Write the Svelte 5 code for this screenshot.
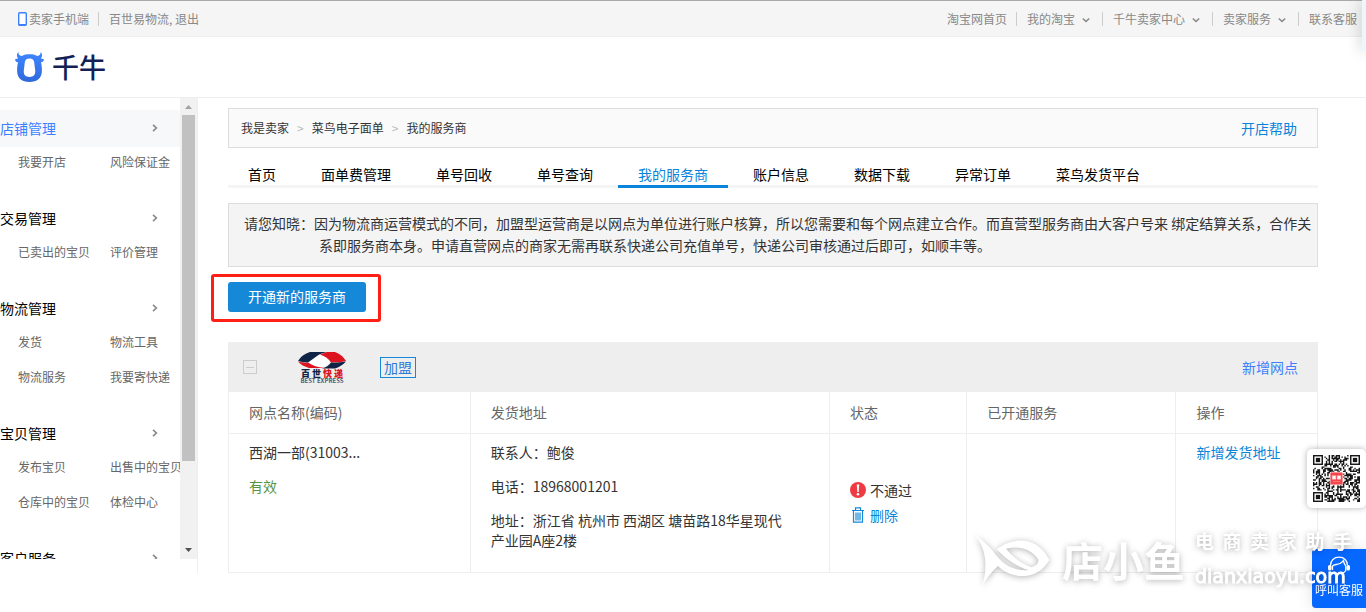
<script lang="ts">
	type MenuGroup = {
		title: string;
		items: string[];
		active?: boolean;
	};

	const topLinks = [
		{ label: '淘宝网首页', menu: false },
		{ label: '我的淘宝', menu: true },
		{ label: '千牛卖家中心', menu: true },
		{ label: '卖家服务', menu: true },
		{ label: '联系客服', menu: false }
	];

	const groups: MenuGroup[] = [
		{ title: '店铺管理', items: ['我要开店', '风险保证金'], active: true },
		{ title: '交易管理', items: ['已卖出的宝贝', '评价管理'] },
		{ title: '物流管理', items: ['发货', '物流工具', '物流服务', '我要寄快递'] },
		{ title: '宝贝管理', items: ['发布宝贝', '出售中的宝贝', '仓库中的宝贝', '体检中心'] },
		{ title: '客户服务', items: [] }
	];

	const tabs = [
		'首页',
		'面单费管理',
		'单号回收',
		'单号查询',
		'我的服务商',
		'账户信息',
		'数据下载',
		'异常订单',
		'菜鸟发货平台'
	];

	const slogan = [...'电商卖家助手'];

	let activeTab = $state('我的服务商');
	let expanded = $state(true);

	const QR_SIZE = 33;

	function inFinder(x: number, y: number) {
		const far = QR_SIZE - 8;
		return (x < 8 && y < 8) || (x >= far && y < 8) || (x < 8 && y >= far);
	}

	function buildQr() {
		let seed = 20231;
		let d = '';
		for (let y = 0; y < QR_SIZE; y++) {
			for (let x = 0; x < QR_SIZE; x++) {
				seed = (seed * 1103515245 + 12345) % 2147483648;
				if (!inFinder(x, y) && seed / 2147483648 > 0.48) d += `M${x} ${y}h1v1h-1z`;
			}
		}
		return d;
	}

	const qrPath = buildQr();
	const finders = [
		[0, 0],
		[QR_SIZE - 7, 0],
		[0, QR_SIZE - 7]
	];
</script>

<div class="topbar">
	<div class="top-left">
		<a href="#mobile" class="mobile">
			<svg width="9" height="14" viewBox="0 0 9 14" aria-hidden="true">
				<rect x="0.7" y="0.7" width="7.6" height="12.6" rx="1" fill="#fff" stroke="#3d7fff" stroke-width="1.4" />
				<path d="M1 12.8h7" stroke="#3d7fff" stroke-width="1.6" />
			</svg>
			卖家手机端
		</a>
		<span class="account"><a href="#account">百世易物流</a>, <a href="#logout">退出</a></span>
	</div>
	<nav class="top-right">
		{#each topLinks as link (link.label)}
			<a href="#top">
				{link.label}
				{#if link.menu}
					<svg class="caret" width="10" height="8" viewBox="0 0 10 8" aria-hidden="true">
						<path d="M1.8 2.5L5 5.5L8.2 2.5" fill="none" stroke="#888" stroke-width="1.6" />
					</svg>
				{/if}
			</a>
		{/each}
	</nav>
</div>

<header class="brand">
	<svg width="30" height="32" viewBox="0 0 30 32" aria-hidden="true">
		<defs>
			<linearGradient id="ox" x1="0" y1="0" x2="0" y2="1">
				<stop offset="0" stop-color="#3f86ff" />
				<stop offset="1" stop-color="#2f69dc" />
			</linearGradient>
		</defs>
		<path
			fill="url(#ox)"
			fill-rule="evenodd"
			d="M3.4 1C3.2 3.2 4.4 4.6 6.6 5C9 3.6 11.6 3.2 14.5 3.2S20 3.6 22.4 5C24.6 4.6 25.8 3.2 25.6 1C27.6 2.8 27.5 5.4 26 7.4L29 8.2C28.8 10.2 27.8 11.2 26 11.3C26.6 14 27 17 26.9 20C26.8 27.4 22 31 14.5 31S2.2 27.4 2.1 20C2 17 2.4 14 3 11.3C1.2 11.2 0.2 10.2 0 8.2L3 7.4C1.5 5.4 1.4 2.8 3.4 1ZM14.5 7.5C11.4 7.5 10.2 8.8 9.8 11.4L8.8 19.6C8.4 24.2 10.6 26 14.5 26S20.6 24.2 20.2 19.6L19.2 11.4C18.8 8.8 17.6 7.5 14.5 7.5Z"
		/>
	</svg>
	<span>千牛</span>
</header>

<div class="layout">
	<aside>
		<div class="side-scroll">
			<nav class="menu">
				{#each groups as group (group.title)}
					<section class:active={group.active}>
						<h2>
							<a href="#group">{group.title}</a>
							<svg width="8" height="10" viewBox="0 0 8 10" aria-hidden="true">
								<path d="M2 1.8L5.4 5L2 8.2" fill="none" stroke="#888" stroke-width="1.6" />
							</svg>
						</h2>
						<ul>
							{#each group.items as item (item)}
								<li><a href="#item">{item}</a></li>
							{/each}
						</ul>
					</section>
				{/each}
			</nav>
			<div class="scrollbar" aria-hidden="true">
				<svg width="17" height="17" viewBox="0 0 17 17"><path d="M5 11L8.5 7L12 11z" fill="#a3a3a3" /></svg>
				<div class="track"><div class="thumb"></div></div>
				<svg width="17" height="17" viewBox="0 0 17 17"><path d="M5 6L8.5 10L12 6z" fill="#505050" /></svg>
			</div>
		</div>
	</aside>

	<main>
		<div class="crumbs">
			<ol>
				<li><a href="#seller">我是卖家</a></li>
				<li><a href="#waybill">菜鸟电子面单</a></li>
				<li>我的服务商</li>
			</ol>
			<a href="#help" class="help">开店帮助</a>
		</div>

		<div class="tabs" role="tablist">
			{#each tabs as tab (tab)}
				<button
					type="button"
					role="tab"
					class:current={tab === activeTab}
					aria-selected={tab === activeTab}
					onclick={() => (activeTab = tab)}
				>
					{tab}
				</button>
			{/each}
		</div>

		<div class="notice">
			<p>
				请您知晓：因为物流商运营模式的不同，加盟型运营商是以网点为单位进行账户核算，所以您需要和每个网点建立合作。而直营型服务商由大客户号来 绑定结算关系，合作关系即服务商本身。申请直营网点的商家无需再联系快递公司充值单号，快递公司审核通过后即可，如顺丰等。
			</p>
		</div>

		<div class="open-new">
			<button type="button">开通新的服务商</button>
		</div>

		<div class="provider">
			<button
				type="button"
				class="toggle"
				aria-label="折叠"
				aria-expanded={expanded}
				onclick={() => (expanded = !expanded)}
			></button>
			<svg class="express" width="74" height="34" viewBox="0 0 74 34" role="img" aria-label="百世快递">
				<path d="M22 12L33 4.500Q36 4 38 5L46 12L38 17.500Q35 19 32 17.500Z" fill="#fff" />
				<path d="M13 11Q17 4.500 25 2H44C38 2.500 35 4 32 6L23 12.500Q18 12.500 13 11Z" fill="#0f2347" />
				<path d="M42 2H50Q57 4.500 61 11Q53 13 46 12.500C44 9 40 6 35 4.500Z" fill="#dc1420" />
				<path d="M13 11.500Q17 16 24 18H40C33 17.500 27 15.500 23 12.500Q18 13 13 11.500Z" fill="#dc1420" />
				<path d="M61 11.500Q57 16 50 18.500H37C41 17.500 44 15.500 46 12.500Q53 13 61 11.500Z" fill="#0f2347" />
				<text x="37" y="27" font-size="9" font-weight="900" text-anchor="middle"><tspan fill="#0f2347">百 世</tspan><tspan fill="#dc1420">{' 快 递'}</tspan></text>
				<text x="37" y="33" font-size="6" font-weight="700" text-anchor="middle" fill="#4d5a75">BEST EXPRESS</text>
			</svg>
			<span class="badge">加盟</span>
			<a href="#add-branch" class="add">新增网点</a>
		</div>

		{#if expanded}
			<table>
				<thead>
					<tr>
						<th class="c-name">网点名称(编码)</th>
						<th class="c-addr">发货地址</th>
						<th class="c-state">状态</th>
						<th class="c-service">已开通服务</th>
						<th>操作</th>
					</tr>
				</thead>
				<tbody>
					<tr>
						<td>
							<p>西湖一部(31003...</p>
							<p class="valid">有效</p>
						</td>
						<td class="address">
							<p>联系人：鲍俊</p>
							<p>电话：18968001201</p>
							<p>地址：浙江省 杭州市 西湖区 塘苗路18华星现代产业园A座2楼</p>
						</td>
						<td class="state">
							<div>
								<svg width="16" height="16" viewBox="0 0 16 16" aria-hidden="true">
									<circle cx="8" cy="8" r="8" fill="#ee3b43" />
									<path d="M6.8 2.6h2.4l-.5 7.4H7.3z" fill="#fff" />
									<circle cx="8" cy="12.3" r="1.3" fill="#fff" />
								</svg>
								不通过
							</div>
							<div>
								<svg width="16" height="16" viewBox="0 0 16 16" aria-hidden="true">
									<path d="M2 3.5H14M5.5 3V.8H10.5V3M3.5 4V15.2H12.5V4M6 5.5V13.5M8 5.5V13.5M10 5.5V13.5" fill="none" stroke="#1688d8" stroke-width="1.2" />
								</svg>
								<a href="#delete">删除</a>
							</div>
						</td>
						<td></td>
						<td><a href="#add-address">新增发货地址</a></td>
					</tr>
				</tbody>
			</table>
		{/if}
	</main>
</div>

<div class="drawer"></div>

<div class="qr">
	<svg width="47" height="47" viewBox="0 0 33 33" role="img" aria-label="二维码">
		<path d={qrPath} fill="#161616" />
		{#each finders as [x, y]}
			<rect x={x + 0.5} y={y + 0.5} width="6" height="6" fill="#fff" stroke="#161616" />
			<rect x={x + 2} y={y + 2} width="3" height="3" fill="#161616" />
		{/each}
		<rect x="12" y="12" width="9" height="9" rx="1" fill="#f5464c" stroke="#fff" stroke-width="0.5" />
		<path d="M13.5 14.5h2.5v2.5h-2.5zM17 14.5h2.5v2.5h-2.5zM14 18.7h5" fill="#fff" stroke="#fbb" stroke-width="0.3" />
	</svg>
</div>

<button type="button" class="service">
	<svg width="24" height="20" viewBox="0 0 24 20" aria-hidden="true">
		<g fill="none" stroke="#fff" stroke-width="1.3">
			<path d="M3.5 9.5C3.5 4.5 7 1.2 12 1.2S20.5 4.5 20.5 9.5" />
			<path d="M5.5 10C7 8 10 9 13 7.5C15 6.5 16 5 16.5 4.5C16.5 7 18 8.5 18.8 10" />
			<path d="M5.5 10V14M18.8 10V14C18.5 16 16.5 17 14 17.3" />
		</g>
		<rect x="1" y="9" width="3.5" height="5.5" rx="1.5" fill="#fff" />
		<rect x="19.5" y="9" width="3.5" height="5.5" rx="1.5" fill="#fff" />
	</svg>
	呼叫客服
</button>

<div class="stamp">
	<svg width="76" height="58" viewBox="40 42 228 174" aria-hidden="true">
		<path
			fill="#fff"
			fill-rule="evenodd"
			d="M43 55C60 72 84 86 105 116C128 146 160 166 204 162C176 156 138 132 108 100C140 76 170 72 192 74C226 78 252 102 266 132C250 160 226 178 192 180C160 182 132 170 112 150C96 164 82 182 66 205C82 150 76 98 43 55ZM136 98C154 120 180 142 212 154C226 150 236 142 232 130C214 100 176 88 136 98Z"
		/>
	</svg>
	<strong>店小鱼</strong>
	<div class="stamp-side">
		<div class="slogan">
			{#each slogan as char}
				<span>{char}</span>
			{/each}
		</div>
		<div class="domain">dianxiaoyu.com</div>
	</div>
</div>

<style>
	:global(body) {
		background: #fff;
		color: #333;
		font-family: 'Noto Sans CJK SC', 'Noto Sans', sans-serif;
		font-size: 14px;
		line-height: 20px;
		overflow: hidden;
	}

	a {
		color: inherit;
		text-decoration: none;
	}

	button {
		font: inherit;
		border: 0;
		cursor: pointer;
	}

	p,
	h2,
	ul,
	ol {
		margin: 0;
		padding: 0;
		list-style: none;
	}

	svg {
		flex: none;
	}

	.topbar {
		display: flex;
		justify-content: space-between;
		align-items: center;
		height: 35px;
		border-top: 1px solid #aaa;
		border-bottom: 1px solid #eee;
		background: #f5f5f5;
		color: #888;
		font-size: 12px;
		line-height: 14px;
	}

	.top-left,
	.top-right,
	.mobile,
	.top-right a {
		display: flex;
		align-items: center;
		white-space: nowrap;
	}

	.mobile {
		gap: 2px;
		padding: 0 9px 0 18px;
	}

	.account {
		padding-left: 10px;
		border-left: 1px solid #ccc;
	}

	.top-right a {
		padding: 0 9px 0 10px;
	}

	.top-right a + a {
		border-left: 1px solid #ccc;
	}

	.caret {
		margin: 2px 2px 0 6px;
	}

	.brand {
		display: flex;
		align-items: center;
		gap: 7px;
		height: 60px;
		padding-left: 15px;
		border-bottom: 1px solid #eee;
		color: #141f56;
		font-size: 27px;
		font-weight: 500;
		line-height: 40px;
	}

	.layout {
		display: flex;
		align-items: flex-start;
	}

	aside {
		flex: none;
		width: 197px;
		padding-bottom: 14px;
		border-right: 1px solid #eee;
	}

	.side-scroll {
		display: flex;
		height: calc(100vh - 151px);
	}

	.menu {
		flex: 1;
		min-width: 0;
		padding-top: 12px;
		overflow: hidden;
	}

	.menu section {
		margin-bottom: 23px;
	}

	h2 {
		display: flex;
		align-items: center;
		justify-content: space-between;
		height: 36px;
		padding: 0 21px 1px 0;
		color: #000;
		font-size: 14px;
		font-weight: 400;
	}

	.active h2 {
		background: #f7f8fa;
		color: #3d7fff;
	}

	.menu ul {
		display: grid;
		grid-template-columns: 92px 92px;
		row-gap: 5px;
		padding-left: 18px;
		color: #666;
		font-size: 12px;
		line-height: 30px;
		white-space: nowrap;
	}

	.scrollbar {
		display: flex;
		flex-direction: column;
		width: 17px;
		background: #f1f1f1;
	}

	.track {
		flex: 1;
		padding: 0 2px;
	}

	.thumb {
		height: 81%;
		background: #c1c1c1;
	}

	main {
		flex: 1;
		min-width: 0;
		padding: 10px 48px 0 30px;
	}

	.crumbs {
		display: flex;
		align-items: center;
		justify-content: space-between;
		height: 38px;
		padding: 0 20px 0 12px;
		border: 1px solid #ddd;
		background: #fafafa;
		font-size: 12px;
	}

	.crumbs ol {
		display: flex;
	}

	.crumbs li + li::before {
		content: '>';
		margin: 0 8px;
		color: #bbb;
	}

	.help {
		color: #0a84d9;
		font-size: 14px;
	}

	.tabs {
		display: flex;
		gap: 5px;
		margin-top: 16px;
		box-shadow: inset 0 -3px #f5f5f5;
	}

	.tabs button {
		padding: 0 20px 1px;
		border-bottom: 3px solid transparent;
		background: none;
		color: #000;
		white-space: nowrap;
	}

	.tabs .current {
		border-color: #0a84d9;
		color: #0a84d9;
	}

	.notice {
		margin-top: 15px;
		padding: 8px 4px 10px 90px;
		border: 1px solid #ddd;
		background: #f4f4f4;
		line-height: 22px;
	}

	.notice p {
		text-indent: -75px;
	}

	.open-new {
		position: relative;
		width: max-content;
		margin: 15px 0 30px;
	}

	.open-new::after {
		content: '';
		position: absolute;
		inset: -8px -15px -10px -17px;
		border: 3px solid #ff2015;
		border-radius: 3px;
		pointer-events: none;
	}

	.open-new button {
		display: block;
		height: 30px;
		padding: 0 20px 2px;
		border-radius: 3px;
		background: #1688d8;
		color: #fff;
	}

	.provider {
		display: flex;
		align-items: center;
		height: 50px;
		padding: 0 20px 0 15px;
		background: #eee;
	}

	.toggle {
		width: 14px;
		height: 14px;
		padding: 0;
		border: 1px solid #ccc;
		background: linear-gradient(#ccc, #ccc) center / 8px 1px no-repeat;
	}

	.express {
		margin: 0 21px 0 28px;
	}

	.badge {
		padding: 0 3px;
		border: 1px solid #1688d8;
		color: #2d7bd9;
		line-height: 19px;
	}

	.add {
		margin-left: auto;
		color: #3d7fff;
	}

	table {
		width: 100%;
		border-collapse: collapse;
		table-layout: fixed;
	}

	th,
	td {
		box-sizing: border-box;
		padding: 8px 20px;
		border: 1px solid #eee;
		text-align: left;
		vertical-align: top;
	}

	th {
		height: 41px;
		border-top: 0;
		color: #666;
		font-weight: 400;
		vertical-align: middle;
	}

	td {
		height: 139px;
	}

	.c-name {
		width: 22.2%;
	}

	.c-addr {
		width: 33%;
	}

	.c-state {
		width: 12.6%;
	}

	.c-service {
		width: 19.2%;
	}

	td p {
		margin-bottom: 14px;
	}

	td p:last-child {
		margin-bottom: 0;
	}

	td a {
		color: #0a84d9;
	}

	.valid {
		color: #5b9345;
	}

	td.address {
		padding-right: 40px;
	}

	td.state {
		vertical-align: middle;
		line-height: 25px;
	}

	.state div {
		display: flex;
		align-items: center;
		gap: 4px;
	}

	.drawer {
		position: fixed;
		top: 0;
		right: 0;
		width: 4px;
		height: 51px;
		background: #eef6fd;
		box-shadow: 0 0 14px rgba(0, 0, 0, 0.35);
	}

	.qr {
		position: fixed;
		right: 0;
		bottom: 104px;
		padding: 6px;
		border-radius: 5px;
		background: #fff;
		box-shadow: 0 0 6px rgba(0, 0, 0, 0.3);
	}

	.qr svg {
		display: block;
	}

	.service {
		position: fixed;
		right: 0;
		bottom: 4px;
		display: flex;
		flex-direction: column;
		align-items: center;
		gap: 4px;
		padding: 7px 3px 8px;
		border-radius: 4px 0 0 4px;
		background: #0768ff;
		box-shadow: 0 0 16px rgba(0, 0, 0, 0.12);
		color: #fff;
		font-size: 12px;
	}

	.stamp {
		position: fixed;
		right: 14px;
		bottom: 22px;
		display: flex;
		align-items: center;
		color: #fff;
		filter: drop-shadow(0 1px 3px rgba(0, 0, 0, 0.3));
		pointer-events: none;
	}

	.stamp strong {
		margin: 0 10px 0 12px;
		font-size: 41px;
		font-weight: 700;
		line-height: 60px;
	}

	.stamp-side {
		width: 157px;
	}

	.slogan {
		display: flex;
		justify-content: space-between;
		font-size: 19px;
		font-weight: 700;
		line-height: 26px;
	}

	.domain {
		margin-top: 8px;
		font-family: 'DejaVu Sans', sans-serif;
		font-size: 19px;
		line-height: 28px;
		-webkit-text-stroke: 1px #fff;
	}
</style>
